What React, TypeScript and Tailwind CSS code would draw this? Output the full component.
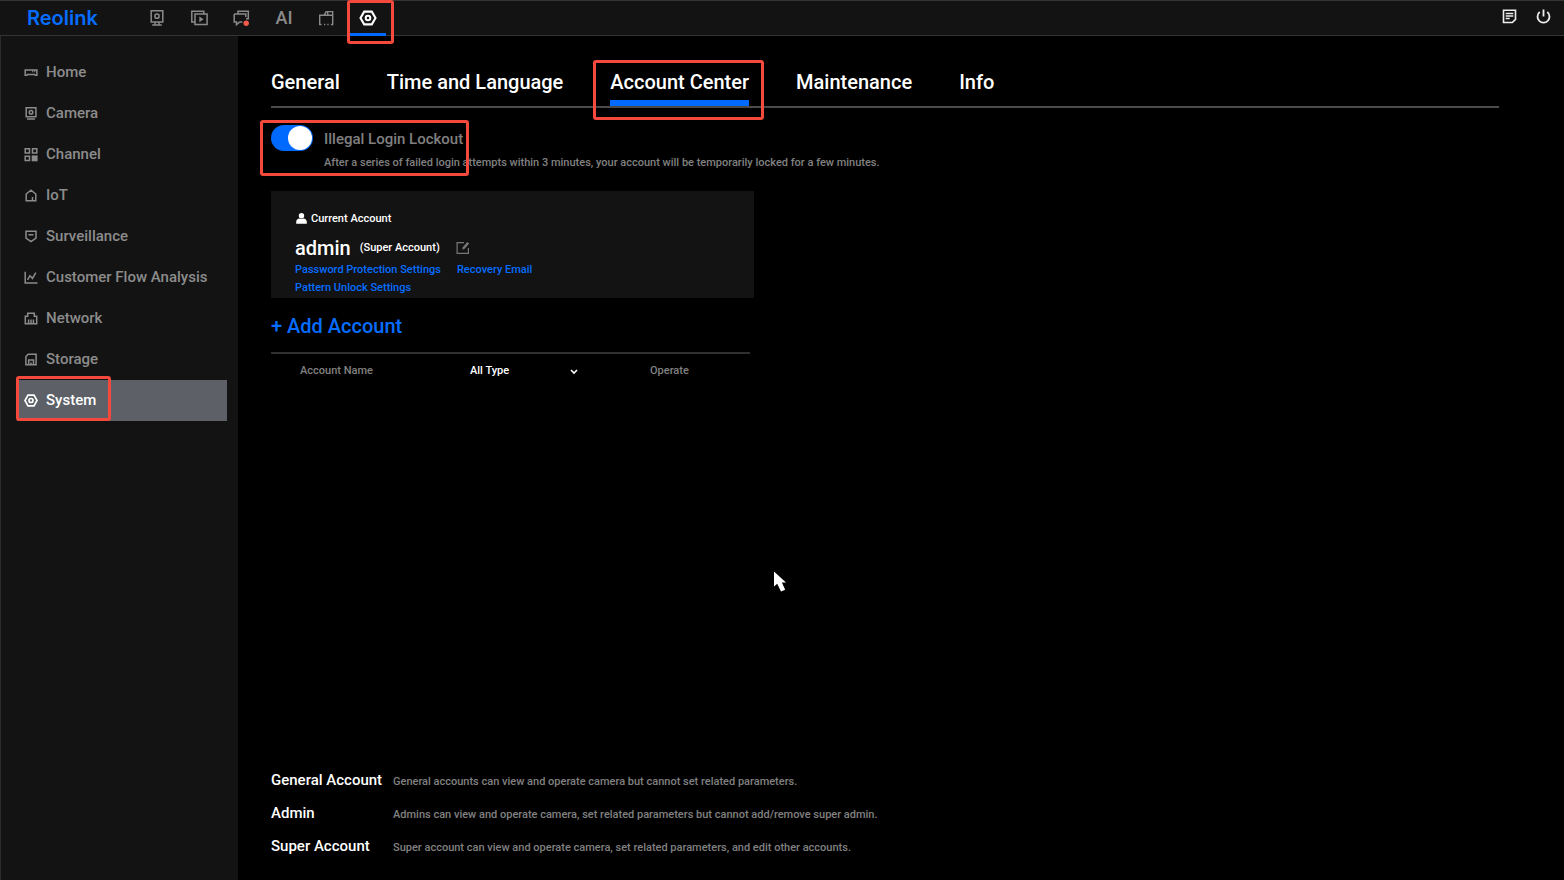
import { useState } from "react";

const SIDEBAR = ["Home", "Camera", "Channel", "IoT", "Surveillance", "Customer Flow Analysis", "Network", "Storage", "System"];

const TABS = ["General", "Time and Language", "Account Center", "Maintenance", "Info"];

const ROLES = [
  { name: "General Account", text: "General accounts can view and operate camera but cannot set related parameters." },
  { name: "Admin", text: "Admins can view and operate camera, set related parameters but cannot add/remove super admin." },
  { name: "Super Account", text: "Super account can view and operate camera, set related parameters, and edit other accounts." },
];

// red callout frame drawn over its parent
function Callout({ className }: { className: string }) {
  return <span aria-hidden="true" className={`pointer-events-none absolute z-10 rounded-[3px] border-3 border-[#f4493c] ${className}`} />;
}

function SideIcon({ name }: { name: string }) {
  return (
    <svg viewBox="0 0 14 14" className="size-[14px] shrink-0" fill="none" stroke="currentColor" strokeWidth="1.5" aria-hidden="true">
      {name === "Home" && <path d="M1.2 4h11.7v5.2h-1.6l-.7-.8H3.5l-.7.8H1.2zM8.2 5.5h1M10.300 5.500h1" />}
      {name === "Camera" && (
        <>
          <path d="M2.2 .8h9.700v9H2.200zM3 12h8" />
          <circle cx="7" cy="5.300" r="1.800" />
        </>
      )}
      {name === "Channel" && (
        <>
          <path d="M1.200 .8h4.300v4.300H1.200zM8.500 .8h4.300v4.300H8.500zM1.200 8.200h4.300v4.300H1.200z" />
          <path d="M7.700 7.400h5.900v5.900H7.700z" fill="currentColor" stroke="none" />
        </>
      )}
      {name === "IoT" && <path d="M2.200 5L7 1.200 11.800 5v6.700H2.200zM8.500 11.700V8" />}
      {name === "Surveillance" && <path d="M2 1.200h10V8l-5 3.500L2 8zM4.500 4.700h5" />}
      {name === "Customer Flow Analysis" && <path d="M1.200 .7v11.200h12.300M3.500 8.900L6 4.700l2.500 2.700 3.300-5.700" />}
      {name === "Network" && <path d="M1.300 11.700V4.200h2.400V1.300h6.600v2.900h2.400v7.500zM4.600 11.500v-4M7 11.500v-4M9.400 11.500v-4" />}
      {name === "Storage" && <path d="M4.200 1.200h7.900v10.500H1.900V3.500zM4.700 11.500V7h4.800v4.500M7 11.500v-2" />}
      {name === "System" && (
        <>
          <path d="M4 1.200h6l3 5.300-3 5.300H4L1 6.500z" strokeWidth="1.700" />
          <circle cx="7" cy="6.500" r="2" strokeWidth="1.700" />
        </>
      )}
    </svg>
  );
}

function TopIcon({ name }: { name: string }) {
  return (
    <svg viewBox="0 0 18 18" className="size-[18px]" fill="none" stroke="currentColor" strokeWidth="1.5" aria-hidden="true">
      {name === "Live" && (
        <>
          <path d="M2.200 1.700h11.600v11.200H2.200zM6 13v2.500M10 13v2.500M3.200 15.900h9.600" />
          <circle cx="8" cy="7.200" r="2.100" />
        </>
      )}
      {name === "Playback" && (
        <>
          <path d="M3.800 13H.8V2.200h12v2.600M4 5h12.100v10.600H4z" />
          <path d="M8.300 7.400l4.300 2.900-4.300 2.900z" fill="currentColor" stroke="none" />
        </>
      )}
      {name === "Messages" && (
        <>
          <path d="M5 4.500V2.200h10.300v7.600h-2.300M1.200 5h11.600v3M1.200 5v8h2.300v2.700L6.800 13h2.600" />
          <circle cx="13.200" cy="14.200" r="2.700" fill="#f4594a" stroke="none" />
        </>
      )}
      {name === "Devices" && <path d="M4.500 15.500H2.700V6.200h4.500l1.900-3.600h6.600v12.900h-1.800M7.500 6.200h8M7 15.500h1.300M10.300 15.500h1.300M10.700 3v3" strokeWidth="1.400" />}
      {name === "Settings" && (
        <>
          <path d="M5.200 2.600h7.600L16.500 9l-3.700 6.400H5.200L1.500 9z" strokeWidth="2.100" />
          <circle cx="9" cy="9" r="2.300" strokeWidth="2" />
        </>
      )}
      {name === "Log" && (
        <>
          <path d="M3.500 2.200h12v9.100l-3.200 3.200H3.500z" strokeWidth="1.600" />
          <path d="M5.700 5.500h7.600M5.700 8h7.600M5.700 10.500h4" strokeWidth="1.300" />
        </>
      )}
      {name === "Power" && <path d="M5.700 4a6 6 0 1 0 7.600 0M9.500 1.500v7" strokeWidth="1.800" />}
    </svg>
  );
}

function Header() {
  return (
    <header className="flex h-[36px] items-stretch border-t border-b border-[#353535] bg-[#131313] text-[#8a8a8a]">
      <a href="#home" className="flex w-[137px] items-center pl-[27px] font-['Inter',sans-serif] text-[20px] leading-none font-semibold text-[#066dff]">
        Reolink
      </a>
      <nav aria-label="Modules" className="flex">
        {["Live", "Playback", "Messages", "AI", "Devices", "Settings"].map((name) => (
          <a
            key={name}
            href={`#${name}`}
            aria-label={name}
            className={`relative flex w-[42px] items-center justify-center ${name === "Settings" ? "text-white" : ""}`}
          >
            {name === "AI" ? <span className="text-[18px] leading-none font-medium">AI</span> : <TopIcon name={name} />}
            {name === "Settings" && (
              <>
                <span className="absolute -bottom-px left-[3px] h-[3px] w-[36px] bg-[#006aff]" />
                <Callout className="-top-px left-0 h-[44px] w-[47px]" />
              </>
            )}
          </a>
        ))}
      </nav>
      <div className="ml-auto flex items-center gap-4 pr-3 pb-[2px] text-[#ededed]">
        <button aria-label="Log">
          <TopIcon name="Log" />
        </button>
        <button aria-label="Power">
          <TopIcon name="Power" />
        </button>
      </div>
    </header>
  );
}

function Sidebar() {
  return (
    <aside className="w-[238px] shrink-0 border-l border-[#2b2b2b] bg-[#131313] pt-[16px] pr-[11px] pl-[16px] font-medium">
      <nav aria-label="Settings">
        {SIDEBAR.map((name) => (
          <a
            key={name}
            href={`#${name}`}
            className={`relative flex h-[41px] items-center gap-2 pl-[7px] text-[15px] ${
              name === "System" ? "bg-[#5d6066] text-white" : "text-[#8c8c8c]"
            }`}
          >
            <SideIcon name={name} />
            {name}
            {name === "System" && <Callout className="-top-[4px] -left-px h-[45px] w-[95px]" />}
          </a>
        ))}
      </nav>
    </aside>
  );
}

function AccountCard() {
  return (
    <section className="h-[107px] w-[483px] bg-[#131313] pt-[19px] pl-[24px] text-[11px] leading-[18px]">
      <h2 className="flex items-center gap-1 text-white">
        <svg viewBox="0 0 12 12" className="size-[12px]" fill="currentColor" aria-hidden="true">
          <circle cx="6.500" cy="2.700" r="2.700" />
          <path d="M1.200 10.700V8.900c0-2 1.500-3.100 3.300-3.300.7.6 3.300.6 4 0 1.800.2 3.300 1.300 3.300 3.300v1.800z" />
        </svg>
        Current Account
      </h2>
      <div className="mt-[8px] flex h-[24px] items-center text-white">
        <span className="text-[20px] leading-[24px]">admin</span>
        <span className="ml-[9px]">(Super Account)</span>
        <button aria-label="Edit account" className="ml-4 text-[#777]">
          <svg viewBox="0 0 14 14" className="size-[14px]" fill="none" stroke="currentColor" strokeWidth="1.200" aria-hidden="true">
            <path d="M8 1.700H1.100v10.600h11.300V7" />
            <path d="M6.200 8.800l.6-2.600L11.200 1l2 1.600-4.500 5.200z" fill="currentColor" stroke="none" />
          </svg>
        </button>
      </div>
      <div className="flex gap-4 pt-px text-[#066dff]">
        <a href="#password">Password Protection Settings</a>
        <a href="#recovery">Recovery Email</a>
      </div>
      <a href="#pattern" className="text-[#066dff]">
        Pattern Unlock Settings
      </a>
    </section>
  );
}

export default function App() {
  const [lockout, setLockout] = useState(true);

  return (
    <div className="relative flex min-h-screen flex-col bg-black font-['Roboto',sans-serif] text-white">
      <Header />
      <div className="flex grow">
        <Sidebar />
        <main className="flex grow flex-col pr-[65px] pb-[17px] pl-[33px] font-medium">
          {/* Tabs */}
          <nav aria-label="System" className="flex h-[72px] gap-[47px] border-b-2 border-[#4a4a4a] pt-[24px] text-[20px] leading-[44px]">
            {TABS.map((tab) => (
              <a key={tab} href={`#${tab}`} className="relative">
                {tab}
                {tab === "Account Center" && (
                  <>
                    <span className="absolute inset-x-0 bottom-0 h-[6px] bg-[#006aff]" />
                    <Callout className="top-0 -left-[17px] h-[60px] w-[171px]" />
                  </>
                )}
              </a>
            ))}
          </nav>

          {/* Lockout switch */}
          <div className="relative flex gap-[11px] pt-[17px]">
            <label className="relative h-[26px] w-[42px] shrink-0">
              <input
                id="lockout"
                type="checkbox"
                role="switch"
                checked={lockout}
                onChange={(e) => setLockout(e.target.checked)}
                className="peer absolute inset-0 size-full appearance-none rounded-full bg-[#555] checked:bg-[#006aff]"
              />
              <span className="pointer-events-none absolute top-px left-px size-[24px] rounded-full bg-white peer-checked:left-[17px]" />
            </label>
            <div className="text-[#808080]">
              <label htmlFor="lockout" className="block text-[15px] leading-[28px]">
                Illegal Login Lockout
              </label>
              <p className="text-[11px] leading-[20px]">
                After a series of failed login attempts within 3 minutes, your account will be temporarily locked for a few minutes.
              </p>
            </div>
            <Callout className="top-[12px] -left-[11px] h-[56px] w-[209px]" />
          </div>

          <div className="mt-[18px]">
            <AccountCard />
          </div>

          <button className="mt-[14px] self-start text-[20px] leading-[28px] text-[#066dff]">+ Add Account</button>

          <table className="mt-[12px] w-[479px] table-fixed border-t-2 border-[#303030] text-left text-[11px]">
            <thead>
              <tr className="h-[36px] text-[#808080]">
                <th className="w-[199px] pl-[29px] font-medium">Account Name</th>
                <th className="w-[180px] font-medium">
                  <div className="relative w-[110px] text-white">
                    <select aria-label="Account type" className="w-full appearance-none bg-black">
                      <option>All Type</option>
                    </select>
                    <svg viewBox="0 0 8 8" className="pointer-events-none absolute top-1/2 right-[2px] size-[8px] -translate-y-1/2" fill="none" stroke="currentColor" strokeWidth="1.600" aria-hidden="true">
                      <path d="M1 2l3 3 3-3" />
                    </svg>
                  </div>
                </th>
                <th className="font-medium">Operate</th>
              </tr>
            </thead>
          </table>

          {/* Role notes */}
          <dl className="mt-auto grid grid-cols-[122px_1fr]">
            {ROLES.map((role) => (
              <div key={role.name} className="col-span-2 grid h-[33px] grid-cols-subgrid items-baseline">
                <dt className="text-[15px] leading-[33px]">{role.name}</dt>
                <dd className="text-[11px] text-[#808080]">{role.text}</dd>
              </div>
            ))}
          </dl>
        </main>
      </div>

      {/* Mouse pointer */}
      <svg viewBox="0 0 14 21" className="pointer-events-none absolute top-[571px] left-[773px] h-[21px] w-[14px]" fill="#fff" aria-hidden="true">
        <path d="M1 .5v15l3.200-2.800L8 20.500l4.200-1.800-3.300-7.200H13z" />
      </svg>
    </div>
  );
}
